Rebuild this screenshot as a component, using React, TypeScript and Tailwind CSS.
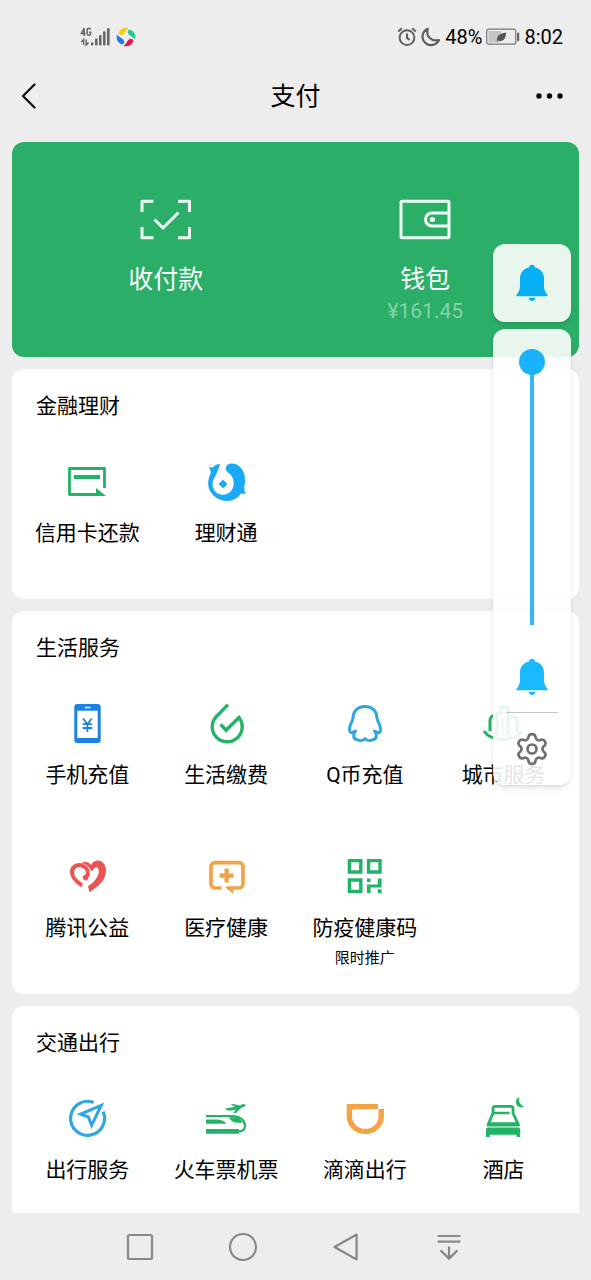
import { ReactNode, useState } from "react";
import { Settings } from "lucide-react";

const GREEN = "#22b466";
const BLUE = "#1aa9f5";
const ORANGE = "#f2a345";

type Service = {
  name: string;
  icon: ReactNode;
  note?: string;
};

function Icon({ children }: { children: ReactNode }) {
  return (
    <svg viewBox="0 0 40 40" className="w-10 h-10 overflow-visible" fill="none" aria-hidden="true">
      {children}
    </svg>
  );
}

const finance: Service[] = [
  {
    name: "信用卡还款",
    icon: (
      <Icon>
        <path d="M37.5 26V6.5H2.5V32.5H30" stroke={GREEN} strokeWidth="2.8" strokeLinejoin="round" />
        <path d="M7 13H33V17H7ZM29 26L39 33.9H29Z" fill={GREEN} />
      </Icon>
    ),
  },
  {
    name: "理财通",
    icon: (
      <Icon>
        <path
          d="M14 2C10.5 2.2 8 3.6 6.6 5.6L3 5C4 7 4.8 9 4.8 11C2 16 1.5 22 3 27C6 34 13 39 21 39C27 39 32 36 35 31.5L40 32C38.6 30 38.2 28 38.2 25C40 18 39 11 35 6C31 1.2 24 0.2 20.8 3.5C19 5.5 19.5 8.5 22 10.5C27 14 28 18 27.6 23C27 29 22 32.8 17 32.8C11 32.8 6.5 28 6.5 22C7 16 12 11 14 2Z"
          fill={BLUE}
        />
        <path d="M17 18.2L20.8 22L17 25.8L13.2 22Z" fill={BLUE} stroke={BLUE} strokeLinejoin="round" />
      </Icon>
    ),
  },
];

const life: Service[] = [
  {
    name: "手机充值",
    icon: (
      <Icon>
        <rect x="7.3" y="0" width="26.4" height="39" rx="3" fill="#1b82e2" />
        <path d="M10.3 6.7H30.7V34H10.3Z" fill="#fff" />
        <path d="M18 3.5H23.4" stroke="#fff" strokeWidth="1.4" />
        <path d="M16 14.5L20.4 20L24.8 14.5M20.4 20V28M15.6 20.2H25.2M15.6 24H25.2" stroke="#1b82e2" strokeWidth="1.8" />
      </Icon>
    ),
  },
  {
    name: "生活缴费",
    icon: (
      <Icon>
        <path d="M22 0.6L10 12.8A15 15 0 1 0 33 13.5L20 26.2L14.6 20.4" stroke={GREEN} strokeWidth="3.4" />
      </Icon>
    ),
  },
  {
    name: "Q币充值",
    icon: (
      <Icon>
        <path
          d="M20 2.4C12 2.4 8 8 8 14C8 17 4.5 20 4.5 25C4.5 29.5 6.5 29.5 10.5 27C8.5 30 7.5 33 10.5 35.2C14 37 18 37 20 34.6C22 37 26 37 29.5 35.2C32.5 33 31.5 30 29.5 27C33.5 29.5 35.5 29.5 35.5 25C35.5 20 32 17 32 14C32 8 28 2.4 20 2.4Z"
          stroke="#2fa5e4"
          strokeWidth="3"
          strokeLinejoin="round"
        />
      </Icon>
    ),
  },
  {
    name: "城市服务",
    icon: (
      <Icon>
        <path d="M12.5 11.5C8 11 6 13 6 17V27M13 31V11Q13 9 15 9H17V3H24V31M24 13H30Q33 13 33 16V28" stroke={GREEN} strokeWidth="3" />
        <path d="M18.5 14V31" stroke={GREEN} strokeWidth="1.6" />
        <path d="M0 27C7 38 31 38 38 27" stroke={GREEN} strokeWidth="3" />
      </Icon>
    ),
  },
  {
    name: "腾讯公益",
    icon: (
      <Icon>
        <path d="M15 28.5C9 24.4 4.6 19.4 5 14.5C5.5 8.6 12 6.6 17 9.4C21 11.6 21.5 16 20 19.5" stroke="#ee5353" strokeWidth="4" />
        <path
          d="M14 6C19 4 22 5 24 8C27 2.4 34 2 37.5 7.5C41 14 38 22 33 27C29 31 25 33 22.5 35.5L21 29C28 25 32 19 31.8 13.5C31 9 28.5 9 24.5 14.5C22 9 19 7 14 6Z"
          fill="#ee5353"
        />
        <circle cx="18.6" cy="20.6" r="2.8" fill="#ee5353" />
      </Icon>
    ),
  },
  {
    name: "医疗健康",
    icon: (
      <Icon>
        <path
          d="M15.5 31H9A4 4 0 0 1 5 27V9.6A4 4 0 0 1 9 5.6H33A4 4 0 0 1 37 9.6V27A4 4 0 0 1 33 31H21"
          stroke={ORANGE}
          strokeWidth="3.6"
        />
        <path d="M18.6 29.4L27.4 37V31Z" fill={ORANGE} />
        <path d="M20.6 11.6V25.6M13.6 18.6H27.6" stroke={ORANGE} strokeWidth="4.2" />
      </Icon>
    ),
  },
  {
    name: "防疫健康码",
    note: "限时推广",
    icon: (
      <Icon>
        <path d="M4.4 3.6H15.8V15H4.4ZM23.6 3.6H35V15H23.6ZM4.4 23H15.8V34.4H4.4Z" stroke={GREEN} strokeWidth="3.4" />
        <path d="M22 21.4H25.6V25H22ZM22 27.6H32.8V21.4H36.6V30.6H25.6V36H22ZM32.8 32.2H36.6V36H32.8Z" fill={GREEN} />
      </Icon>
    ),
  },
];

const transport: Service[] = [
  {
    name: "出行服务",
    icon: (
      <Icon>
        <path d="M26.5 3.4A17 17 0 1 0 36.2 12.6" stroke="#2fa5e4" strokeWidth="3.2" />
        <path d="M34.2 6.4L13.6 15.2L21.4 18L24.6 26.4Z" stroke="#2fa5e4" strokeWidth="3" />
      </Icon>
    ),
  },
  {
    name: "火车票机票",
    icon: (
      <Icon>
        <path d="M19 9.5C24 9 27 8 29 7.5L24.5 5.5L27 5L34 6.5C36 5 36.5 5 39.5 5.5C40 7 38 8 35 9L30 14H27.5L29.5 10.5C26 12 21 12.5 19 9.5Z" fill={GREEN} />
        <path d="M0 17.2H27C35 17.8 39 22 39 27C39 31 36 32.5 32 32.5" stroke={GREEN} strokeWidth="2.2" />
        <path d="M0 20.6H10C15 20.6 18 22 20.5 24.8H0ZM23 18.2H30C33 19 35.5 20.5 36.5 23.5C31 24.5 25 23.5 23 18.2ZM0 30H33V34.8H0Z" fill={GREEN} />
      </Icon>
    ),
  },
  {
    name: "滴滴出行",
    icon: (
      <Icon>
        <path d="M33 7.6H4.4V17.5A15.9 15 0 0 0 36.2 17.5V10" stroke={ORANGE} strokeWidth="5.4" />
      </Icon>
    ),
  },
  {
    name: "酒店",
    icon: (
      <Icon>
        <path d="M9 14V9.5Q9 7.4 11 7.4H27Q29 7.4 29 9.5V14L34.5 26H4Z" stroke={GREEN} strokeWidth="2.8" strokeLinejoin="round" />
        <path d="M9 14H25.5M4 24.5H34.5" stroke={GREEN} strokeWidth="2.4" />
        <path d="M3 28.4H35L36.2 30V38H32.5V35.8H5.8V38H2V30Z" fill={GREEN} />
        <path d="M35.4 -1.8A5.2 5.2 0 1 0 40 7.4A7 7 0 0 1 35.4 -1.8Z" fill={GREEN} />
      </Icon>
    ),
  },
];

function Bell({ className }: { className: string }) {
  return (
    <svg viewBox="0 0 32 38" className={`w-8 h-[38px] ${className}`} fill="currentColor" aria-hidden="true">
      <path d="M16 0.8C17.8 0.8 18.8 1.8 19 3.4C24.8 4.6 28 9 28 14.5V22C28 26 29.5 28.5 31.8 31.2Q32 32.2 31 32.2H1Q0 32.2 0.2 31.2C2.5 28.5 4 26 4 22V14.5C4 9 7.2 4.6 13 3.4C13.2 1.8 14.2 0.8 16 0.8Z" />
      <path d="M12.6 33.8H19.4C19 36 17.8 37 16 37C14.2 37 13 36 12.6 33.8Z" />
    </svg>
  );
}

function StatusBar() {
  return (
    <div className="flex items-center justify-between h-[73px] shrink-0 pl-20 pr-7 text-black">
      <div className="flex items-center gap-1.5">
        <svg viewBox="0 0 30 20" className="w-[30px] h-5" aria-label="4G">
          <g fill="none" stroke="#666" strokeWidth="1.5">
            <path d="M4.2 9V1.2L1.4 6.4H5.6M10.6 2.6Q10.4 1.2 9 1.2Q7.2 1.2 7.2 3V6.6Q7.2 8.3 9 8.3Q10.6 8.3 10.6 6.6V5.2H9" />
            <path d="M3.6 18V12.6L1.2 15M6.2 12.6V18L8.6 15.6" />
          </g>
          <g fill="#666">
            <rect x="11" y="15.4" width="2.4" height="3" />
            <rect x="15" y="11.6" width="2.6" height="6.8" rx="1" />
            <rect x="19" y="8" width="2.6" height="10.4" rx="1" />
            <rect x="23" y="4.2" width="2.6" height="14.2" rx="1" />
            <rect x="27" y="1" width="2.6" height="17.4" rx="1" />
          </g>
        </svg>
        <svg viewBox="0 0 20 20" className="w-5 h-5" aria-hidden="true">
          <path d="M2.6 6C4 1.6 8 -0.2 12.5 1C10.6 2.4 9.4 5 7.4 7.2C5.6 8.8 3 8.4 2.6 6Z" fill="#fdc913" />
          <path d="M14 2.6C18.4 4 20.2 8 19 12.5C17.6 10.6 15 9.4 12.8 7.4C11.2 5.6 11.6 3 14 2.6Z" fill="#2cc987" />
          <path d="M17.4 14C16 18.4 12 20.2 7.5 19C9.4 17.6 10.6 15 12.6 12.8C14.4 11.2 17 11.6 17.4 14Z" fill="#e8174f" />
          <path d="M6 17.4C1.6 16 -0.2 12 1 7.5C2.4 9.4 5 10.6 7.2 12.6C8.8 14.4 8.4 17 6 17.4Z" fill="#1e78e6" />
        </svg>
      </div>
      <div className="flex items-center gap-1">
        <svg viewBox="0 0 20 20" className="w-5 h-5" fill="none" stroke="#5f5f5f" strokeWidth="2" aria-hidden="true">
          <circle cx="10" cy="10.6" r="7.4" />
          <path d="M10 6.6V10.9L12.6 13M1.2 4.4L4.8 1.2M18.8 4.4L15.2 1.2" />
        </svg>
        <svg viewBox="0 0 20 20" className="w-5 h-5" fill="none" stroke="#5f5f5f" strokeWidth="2.2" strokeLinejoin="round" aria-hidden="true">
          <path d="M6.8 1.8C0.6 4.6 0 12 4.2 15.8C8.6 19.6 15.2 18.6 18 13C9.6 14.8 4.6 9.2 6.8 1.8Z" />
        </svg>
        <span className="text-xl leading-6">48%</span>
        <svg viewBox="0 0 34 18" className="w-[34px] h-[18px]" aria-hidden="true">
          <rect x="0.7" y="1.2" width="29" height="15" rx="2" fill="none" stroke="#777" strokeWidth="1.2" />
          <rect x="2.4" y="3" width="12.6" height="11.4" fill="#c4c4c4" />
          <path d="M11 13.5C10 8 14 5.5 20 4.5C20 11 17 14 12.5 12.5L11 13.5Z" fill="#555" />
          <rect x="31" y="4.6" width="2.2" height="8.6" rx="1" fill="#666" />
        </svg>
        <span className="text-xl leading-6">8:02</span>
      </div>
    </div>
  );
}

function NavHeader() {
  return (
    <header className="grid grid-cols-3 items-center h-[48px] -mb-0.5 shrink-0 px-5 text-black">
      <button type="button" aria-label="返回" className="justify-self-start">
        <svg viewBox="0 0 16 28" className="w-4 h-7" fill="none" stroke="#111" strokeWidth="2.2" strokeLinecap="round" strokeLinejoin="round">
          <path d="M14.5 1.5L3 13L14.5 24.5" />
        </svg>
      </button>
      <h1 className="justify-self-center text-[25px] leading-8">支付</h1>
      <button type="button" aria-label="更多" className="justify-self-end">
        <svg viewBox="0 0 40 8" className="w-10 h-2" fill="#000">
          <circle cx="8" cy="3" r="2.7" />
          <circle cx="18.5" cy="3" r="2.7" />
          <circle cx="29" cy="3" r="2.7" />
        </svg>
      </button>
    </header>
  );
}

function PayCard() {
  return (
    <section className="grid grid-cols-2 items-start px-6 pt-[53px] pb-8 rounded-xl bg-[#2bae67] text-white">
      <button type="button" className="flex flex-col items-center">
        <svg viewBox="0 0 52 48" className="w-[52px] h-12" fill="none" stroke="#effff5" strokeWidth="3" strokeLinejoin="round" aria-hidden="true">
          <path d="M2 17V6.2H13.5M38 6.2H49.5V17M49.5 32V42.8H38M13.5 42.8H2V32" />
          <path d="M14.5 24.5L23 33L38.5 17.5" />
        </svg>
        <span className="mt-[21px] text-[25px] leading-8">收付款</span>
      </button>
      <button type="button" className="flex flex-col items-center">
        <svg viewBox="0 0 52 48" className="w-[52px] h-12" fill="none" stroke="#effff5" strokeWidth="3" strokeLinejoin="round" aria-hidden="true">
          <rect x="2" y="6.2" width="48" height="36.6" rx="1" />
          <path d="M50 18H33A6.4 6.4 0 0 0 33 31H50" />
          <circle cx="33.4" cy="24.5" r="2.6" fill="#effff5" stroke="none" />
        </svg>
        <span className="mt-[21px] text-[25px] leading-8">钱包</span>
        <span className="mt-px text-[21px] leading-7 text-[#86d3a8]">¥161.45</span>
      </button>
    </section>
  );
}

function ServiceCard({ title, items }: { title: string; items: Service[] }) {
  return (
    <section className="pt-[25px] rounded-xl bg-white text-black">
      <h2 className="px-6 text-[21px] leading-6">{title}</h2>
      <div className="grid grid-cols-4 gap-y-4 mt-11 px-1.5">
        {items.map((item) => (
          <button key={item.name} type="button" className="flex flex-col items-center min-h-[137px]">
            {item.icon}
            <span className="mt-[17px] text-[21px] leading-7 whitespace-nowrap">{item.name}</span>
            {item.note && <span className="mt-1 text-[15px] leading-6">{item.note}</span>}
          </button>
        ))}
      </div>
    </section>
  );
}

function VolumePanel() {
  const [volume, setVolume] = useState(100);

  return (
    <div className="absolute right-5 top-[244px] flex flex-col gap-[7px] w-[78px]">
      <button type="button" aria-label="铃声模式" className="flex items-center justify-center h-[78px] rounded-xl bg-white/89 shadow-md">
        <Bell className="text-[#08aff3]" />
      </button>
      <div className="flex flex-col items-center pt-5 pb-[18px] rounded-xl bg-white/89 shadow-md">
        <input
          type="range"
          aria-label="音量"
          min={0}
          max={100}
          value={volume}
          onChange={(e) => setVolume(Number(e.target.value))}
          className="appearance-none w-[26px] h-[276px] [writing-mode:vertical-lr] [direction:rtl] bg-[linear-gradient(#35b5f3,#35b5f3)] bg-[length:4px_100%] bg-center bg-no-repeat [&::-webkit-slider-thumb]:appearance-none [&::-webkit-slider-thumb]:w-[26px] [&::-webkit-slider-thumb]:h-[26px] [&::-webkit-slider-thumb]:rounded-full [&::-webkit-slider-thumb]:bg-[#1ab3fb]"
        />
        <Bell className="mt-[33px] text-[#1ab8ff]" />
        <div className="w-[52px] h-px mt-4 bg-[#c4c4c4]" />
        <button type="button" aria-label="设置" className="mt-[18px]">
          <Settings className="w-9 h-9 text-[#707070]" strokeWidth={1.8} />
        </button>
      </div>
    </div>
  );
}

function SystemNav() {
  return (
    <nav className="grid grid-cols-4 place-items-center h-[67px] shrink-0 pl-[88px] pr-[91px] bg-[#ededed]">
      <button type="button" aria-label="最近任务">
        <svg viewBox="0 0 32 32" className="w-8 h-8" fill="none" stroke="#888" strokeWidth="2.2">
          <rect x="4" y="4" width="24" height="24" rx="1.5" />
        </svg>
      </button>
      <button type="button" aria-label="主屏幕">
        <svg viewBox="0 0 32 32" className="w-8 h-8" fill="none" stroke="#888" strokeWidth="2.2">
          <circle cx="16" cy="16" r="13" />
        </svg>
      </button>
      <button type="button" aria-label="后退">
        <svg viewBox="0 0 32 32" className="w-8 h-8" fill="none" stroke="#888" strokeWidth="2.2" strokeLinejoin="round">
          <path d="M26.6 3.5V28.5L4.5 16Z" />
        </svg>
      </button>
      <button type="button" aria-label="下拉通知">
        <svg viewBox="0 0 32 32" className="w-8 h-8" fill="none" stroke="#888" strokeWidth="2.2">
          <path d="M4.6 5H27.4M4.6 10.6H27.4M16 15.5V27.5M7.6 19.4L16 27.6L24.4 19.4" />
        </svg>
      </button>
    </nav>
  );
}

export default function App() {
  return (
    <div className="relative flex flex-col h-screen overflow-hidden bg-[#ededed] font-[Roboto,'Noto_Sans_CJK_SC',sans-serif]">
      <StatusBar />
      <NavHeader />
      <main className="flex-1 min-h-0 overflow-y-auto [scrollbar-width:none] flex flex-col gap-3 px-3 pt-[23px] *:shrink-0">
        <PayCard />
        <ServiceCard title="金融理财" items={finance} />
        <ServiceCard title="生活服务" items={life} />
        <ServiceCard title="交通出行" items={transport} />
      </main>
      <SystemNav />
      <VolumePanel />
    </div>
  );
}
